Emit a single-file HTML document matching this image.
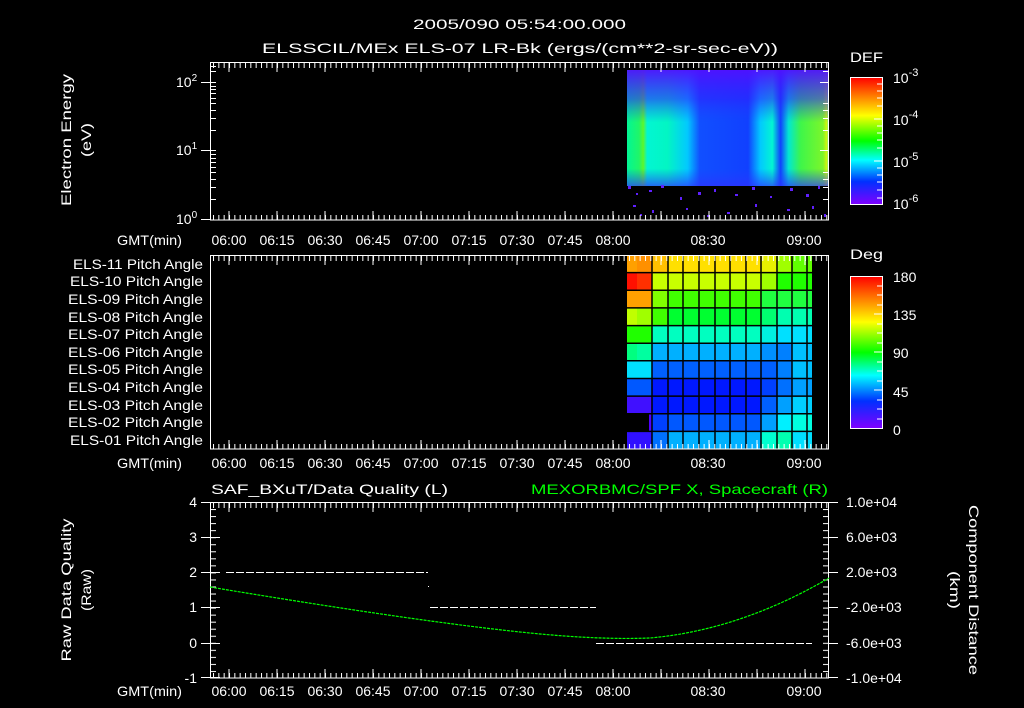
<!DOCTYPE html>
<html><head><meta charset="utf-8"><style>
html,body{margin:0;padding:0;background:#000;width:1024px;height:708px;overflow:hidden}
svg{display:block}
text{font-family:"Liberation Sans",sans-serif;fill:#fff;font-size:14px}
</style></head><body>
<svg width="1024" height="708" viewBox="0 0 1024 708" xmlns="http://www.w3.org/2000/svg">
<defs>
<pattern id="tb" x="229" y="0" width="5.333" height="708" patternUnits="userSpaceOnUse"><rect x="0" y="0" width="1" height="708" fill="#fff"/></pattern>
<pattern id="yb" x="0" y="502" width="1024" height="7.04" patternUnits="userSpaceOnUse"><rect x="0" y="0" width="1024" height="1" fill="#fff"/></pattern>
<linearGradient id="cb" x1="0" y1="0" x2="0" y2="1">
<stop offset="0" stop-color="#ff0000"/><stop offset="0.15" stop-color="#ff8000"/><stop offset="0.3" stop-color="#ffff00"/><stop offset="0.5" stop-color="#00ff00"/><stop offset="0.65" stop-color="#00ffff"/><stop offset="0.82" stop-color="#0030ff"/><stop offset="1" stop-color="#8000ff"/></linearGradient>
<linearGradient id="sp" x1="627" y1="0" x2="829" y2="0" gradientUnits="userSpaceOnUse">
<stop offset="0" stop-color="#00ff90"/><stop offset="0.06" stop-color="#20ff60"/><stop offset="0.08" stop-color="#60ff20"/><stop offset="0.1" stop-color="#00ffd0"/><stop offset="0.2" stop-color="#00ffc0"/><stop offset="0.3" stop-color="#00d0ff"/><stop offset="0.36" stop-color="#1050ff"/><stop offset="0.6" stop-color="#1040ff"/><stop offset="0.66" stop-color="#00d0ff"/><stop offset="0.72" stop-color="#00ffd0"/><stop offset="0.76" stop-color="#1040ff"/><stop offset="0.8" stop-color="#00f0d0"/><stop offset="0.86" stop-color="#40ff40"/><stop offset="0.97" stop-color="#80ff20"/><stop offset="0.99" stop-color="#e0ff00"/><stop offset="1" stop-color="#00ffff"/></linearGradient>
<linearGradient id="spv" x1="0" y1="70" x2="0" y2="186" gradientUnits="userSpaceOnUse">
<stop offset="0" stop-color="#5010ff" stop-opacity="0.95"/><stop offset="0.25" stop-color="#3020ff" stop-opacity="0.6"/><stop offset="0.45" stop-color="#2040ff" stop-opacity="0.05"/><stop offset="0.85" stop-color="#2040ff" stop-opacity="0.05"/><stop offset="1" stop-color="#3030ff" stop-opacity="0.7"/></linearGradient>
</defs>

<text x="413" y="29" textLength="213" lengthAdjust="spacingAndGlyphs" font-size="16">2005/090 05:54:00.000</text>
<text x="262" y="53" textLength="516" lengthAdjust="spacingAndGlyphs" font-size="16">ELSSCIL/MEx ELS-07 LR-Bk  (ergs/(cm**2-sr-sec-eV))</text>

<!-- PANEL 1 -->
<rect x="627" y="70" width="202" height="116" fill="url(#sp)"/>
<rect x="627" y="70" width="202" height="116" fill="url(#spv)"/>
<g fill="#6020ff">
<rect x="628" y="186" width="3" height="3"/><rect x="636" y="193" width="2" height="2"/><rect x="649" y="190" width="3" height="2"/><rect x="661" y="185" width="3" height="3"/><rect x="680" y="197" width="2" height="3"/><rect x="698" y="192" width="3" height="3"/><rect x="714" y="189" width="2" height="3"/><rect x="735" y="194" width="3" height="2"/><rect x="752" y="187" width="3" height="3"/><rect x="770" y="196" width="2" height="2"/><rect x="790" y="188" width="3" height="3"/><rect x="806" y="194" width="3" height="3"/><rect x="818" y="186" width="2" height="3"/>
<rect x="633" y="205" width="3" height="2"/><rect x="652" y="210" width="2" height="3"/><rect x="686" y="208" width="2" height="2"/><rect x="727" y="212" width="3" height="2"/><rect x="755" y="204" width="2" height="3"/><rect x="787" y="209" width="3" height="2"/><rect x="812" y="206" width="2" height="3"/><rect x="640" y="214" width="2" height="2"/><rect x="707" y="215" width="3" height="2"/><rect x="824" y="214" width="2" height="3"/>
</g>
<rect x="210.5" y="62.5" width="618" height="157.5" fill="none" stroke="#fff"/>
<rect x="210" y="63" width="619" height="5" fill="url(#tb)"/>
<rect x="210" y="215" width="619" height="5" fill="url(#tb)"/>
<g stroke="#fff">
<path d="M229 63v9M277 63v9M325 63v9M373 63v9M421 63v9M469 63v9M517 63v9M565 63v9M613 63v9M661 63v9M709 63v9M757 63v9M805 63v9"/>
<path d="M229 220v-9M277 220v-9M325 220v-9M373 220v-9M421 220v-9M469 220v-9M517 220v-9M565 220v-9M613 220v-9M661 220v-9M709 220v-9M757 220v-9M805 220v-9"/>
<path d="M201 82.5h15M201 150.5h15M201 219.5h9M210 199.5h6M210 187.5h6M210 179.5h6M210 172.5h6M210 167.5h6M210 162.5h6M210 158.5h6M210 154.5h6M210 130.5h6M210 118.5h6M210 110.5h6M210 103.5h6M210 98.5h6M210 93.5h6M210 89.5h6M210 86.5h6M210 71.5h6M210 66.5h6"/>
<path d="M829 82.5h-9M829 150.5h-9M829 199.5h-6M829 187.5h-6M829 179.5h-6M829 172.5h-6M829 130.5h-6M829 118.5h-6M829 110.5h-6M829 103.5h-6M829 71.5h-6"/>
</g>
<text x="176" y="87" font-size="14">10<tspan font-size="10" dy="-6">2</tspan></text>
<text x="176" y="155" font-size="14">10<tspan font-size="10" dy="-6">1</tspan></text>
<text x="176" y="224" font-size="14">10<tspan font-size="10" dy="-6">0</tspan></text>
<text transform="translate(71,140) rotate(-90)" text-anchor="middle" font-size="15" textLength="132" lengthAdjust="spacingAndGlyphs">Electron Energy</text>
<text transform="translate(91,140) rotate(-90)" text-anchor="middle" font-size="15" textLength="34" lengthAdjust="spacingAndGlyphs">(eV)</text>
<g font-size="14" text-anchor="middle">
<text x="229" y="245">06:00</text><text x="277" y="245">06:15</text><text x="325" y="245">06:30</text><text x="373" y="245">06:45</text><text x="421" y="245">07:00</text><text x="469" y="245">07:15</text><text x="517" y="245">07:30</text><text x="565" y="245">07:45</text><text x="613" y="245">08:00</text><text x="708" y="245">08:30</text><text x="804" y="245">09:00</text>
</g>
<text x="117" y="245" font-size="14" textLength="65" lengthAdjust="spacingAndGlyphs">GMT(min)</text>
<text x="850" y="62" font-size="16" textLength="33" lengthAdjust="spacingAndGlyphs">DEF</text>
<rect x="850.5" y="77.5" width="32" height="127" fill="url(#cb)" stroke="#fff"/>
<g stroke="#fff"><path d="M882 84h-5M882 91h-5M882 98h-5M882 106h-5M882 119h-8M882 126h-5M882 133h-5M882 140h-5M882 148h-5M882 161h-8M882 168h-5M882 175h-5M882 182h-5M882 190h-5M882 198h-5"/></g>
<g font-size="16"><text x="893" y="83">10<tspan font-size="11" dy="-7">-3</tspan></text><text x="893" y="125">10<tspan font-size="11" dy="-7">-4</tspan></text><text x="893" y="167">10<tspan font-size="11" dy="-7">-5</tspan></text><text x="893" y="209">10<tspan font-size="11" dy="-7">-6</tspan></text></g>

<!-- PANEL 2 -->
<g>
<g transform="translate(0,255)">
<rect x="627" y="0" width="10" height="18" fill="#ffa000"/><rect x="637" y="0" width="15" height="18" fill="#ff9000"/><rect x="652" y="0" width="16" height="18" fill="#ffc000"/><rect x="668" y="0" width="93" height="18" fill="#ffe000"/><rect x="761" y="0" width="16" height="18" fill="#e8f000"/><rect x="777" y="0" width="15" height="18" fill="#a0ff00"/><rect x="792" y="0" width="20" height="18" fill="#60ff00"/>
</g>
<g transform="translate(0,272.6)">
<rect x="627" y="0" width="10" height="18" fill="#ff1000"/><rect x="637" y="0" width="15" height="18" fill="#ff3000"/><rect x="652" y="0" width="109" height="18" fill="#c8ff00"/><rect x="761" y="0" width="16" height="18" fill="#a0ff00"/><rect x="777" y="0" width="35" height="18" fill="#20ff00"/>
</g>
<g transform="translate(0,290.3)">
<rect x="627" y="0" width="25" height="18" fill="#ffa000"/><rect x="652" y="0" width="16" height="18" fill="#80ff00"/><rect x="668" y="0" width="93" height="18" fill="#40ff00"/><rect x="761" y="0" width="51" height="18" fill="#20ff40"/>
</g>
<g transform="translate(0,307.9)">
<rect x="627" y="0" width="10" height="18" fill="#c0ff00"/><rect x="637" y="0" width="15" height="18" fill="#a0ff00"/><rect x="652" y="0" width="16" height="18" fill="#40ff00"/><rect x="668" y="0" width="93" height="18" fill="#00ff30"/><rect x="761" y="0" width="16" height="18" fill="#00ff70"/><rect x="777" y="0" width="35" height="18" fill="#00ffb0"/>
</g>
<g transform="translate(0,325.6)">
<rect x="627" y="0" width="25" height="18" fill="#20ff00"/><rect x="652" y="0" width="109" height="18" fill="#00ffc0"/><rect x="761" y="0" width="16" height="18" fill="#00f0e0"/><rect x="777" y="0" width="35" height="18" fill="#00e0ff"/>
</g>
<g transform="translate(0,343.2)">
<rect x="627" y="0" width="10" height="18" fill="#00ff80"/><rect x="637" y="0" width="15" height="18" fill="#00ffa0"/><rect x="652" y="0" width="109" height="18" fill="#00b0ff"/><rect x="761" y="0" width="16" height="18" fill="#0090ff"/><rect x="777" y="0" width="15" height="18" fill="#0080ff"/><rect x="792" y="0" width="20" height="18" fill="#00c0ff"/>
</g>
<g transform="translate(0,360.8)">
<rect x="627" y="0" width="25" height="18" fill="#00e0ff"/><rect x="652" y="0" width="125" height="18" fill="#0060ff"/><rect x="777" y="0" width="15" height="18" fill="#0080ff"/><rect x="792" y="0" width="20" height="18" fill="#00c0ff"/>
</g>
<g transform="translate(0,378.5)">
<rect x="627" y="0" width="25" height="18" fill="#0058ff"/><rect x="652" y="0" width="109" height="18" fill="#0018ff"/><rect x="761" y="0" width="16" height="18" fill="#0040ff"/><rect x="777" y="0" width="15" height="18" fill="#0070ff"/><rect x="792" y="0" width="20" height="18" fill="#00a0ff"/>
</g>
<g transform="translate(0,396.1)">
<rect x="627" y="0" width="25" height="18" fill="#4010ff"/><rect x="652" y="0" width="109" height="18" fill="#0018ff"/><rect x="761" y="0" width="16" height="18" fill="#0060ff"/><rect x="777" y="0" width="15" height="18" fill="#00a0ff"/><rect x="792" y="0" width="20" height="18" fill="#00d0ff"/>
</g>
<g transform="translate(0,413.8)">
<rect x="649" y="0" width="3" height="18" fill="#5000ff"/><rect x="652" y="0" width="16" height="18" fill="#0040ff"/><rect x="668" y="0" width="93" height="18" fill="#0058ff"/><rect x="761" y="0" width="16" height="18" fill="#00a0ff"/><rect x="777" y="0" width="15" height="18" fill="#00f0ff"/><rect x="792" y="0" width="20" height="18" fill="#00ffe0"/>
</g>
<g transform="translate(0,431.4)">
<rect x="627" y="0" width="25" height="18" fill="#3010ff"/><rect x="652" y="0" width="16" height="18" fill="#0070ff"/><rect x="668" y="0" width="93" height="18" fill="#00b0ff"/><rect x="761" y="0" width="16" height="18" fill="#00ffd0"/><rect x="777" y="0" width="15" height="18" fill="#00ffb0"/><rect x="792" y="0" width="20" height="18" fill="#00e0ff"/>
</g>
<g stroke="#000" stroke-width="1.5">
<path d="M652 255v194M668 255v194M683 255v194M699 255v194M715 255v194M730 255v194M746 255v194M761 255v194M777 255v194M792 255v194M807 255v194"/>
<path d="M627 272.6h185M627 290.3h185M627 307.9h185M627 325.6h185M627 343.2h185M627 360.8h185M627 378.5h185M627 396.1h185M627 413.8h185M627 431.4h185"/>
</g>
</g>
<rect x="210.5" y="255.5" width="618" height="193.5" fill="none" stroke="#fff"/>
<rect x="210" y="256" width="619" height="5" fill="url(#tb)"/>
<rect x="210" y="444" width="619" height="5" fill="url(#tb)"/>
<g stroke="#fff">
<path d="M229 256v9M277 256v9M325 256v9M373 256v9M421 256v9M469 256v9M517 256v9M565 256v9M613 256v9M661 256v9M709 256v9M757 256v9M805 256v9"/>
<path d="M229 449v-9M277 449v-9M325 449v-9M373 449v-9M421 449v-9M469 449v-9M517 449v-9M565 449v-9M613 449v-9M661 449v-9M709 449v-9M757 449v-9M805 449v-9"/>
</g>
<g font-size="14">
<text x="73" y="269" textLength="130" lengthAdjust="spacingAndGlyphs">ELS-11 Pitch Angle</text><text x="70" y="286" textLength="133" lengthAdjust="spacingAndGlyphs">ELS-10 Pitch Angle</text><text x="68" y="304" textLength="135" lengthAdjust="spacingAndGlyphs">ELS-09 Pitch Angle</text><text x="68" y="322" textLength="135" lengthAdjust="spacingAndGlyphs">ELS-08 Pitch Angle</text><text x="68" y="339" textLength="135" lengthAdjust="spacingAndGlyphs">ELS-07 Pitch Angle</text><text x="68" y="357" textLength="135" lengthAdjust="spacingAndGlyphs">ELS-06 Pitch Angle</text><text x="68" y="374" textLength="135" lengthAdjust="spacingAndGlyphs">ELS-05 Pitch Angle</text><text x="68" y="392" textLength="135" lengthAdjust="spacingAndGlyphs">ELS-04 Pitch Angle</text><text x="68" y="410" textLength="135" lengthAdjust="spacingAndGlyphs">ELS-03 Pitch Angle</text><text x="68" y="427" textLength="135" lengthAdjust="spacingAndGlyphs">ELS-02 Pitch Angle</text><text x="70" y="445" textLength="133" lengthAdjust="spacingAndGlyphs">ELS-01 Pitch Angle</text>
</g>
<g font-size="14" text-anchor="middle">
<text x="229" y="468">06:00</text><text x="277" y="468">06:15</text><text x="325" y="468">06:30</text><text x="373" y="468">06:45</text><text x="421" y="468">07:00</text><text x="469" y="468">07:15</text><text x="517" y="468">07:30</text><text x="565" y="468">07:45</text><text x="613" y="468">08:00</text><text x="708" y="468">08:30</text><text x="804" y="468">09:00</text>
</g>
<text x="117" y="468" font-size="14" textLength="65" lengthAdjust="spacingAndGlyphs">GMT(min)</text>
<text x="850" y="259" font-size="16" textLength="33" lengthAdjust="spacingAndGlyphs">Deg</text>
<rect x="850.5" y="276.5" width="32" height="152" fill="url(#cb)" stroke="#fff"/>
<g stroke="#fff"><path d="M882 286h-5M882 295h-5M882 305h-5M882 314h-8M882 324h-5M882 333h-5M882 343h-5M882 352h-8M882 362h-5M882 371h-5M882 381h-5M882 390h-8M882 400h-5M882 409h-5M882 419h-5"/></g>
<g font-size="16"><text x="893" y="282">180</text><text x="893" y="320">135</text><text x="893" y="358">90</text><text x="893" y="397">45</text><text x="893" y="435">0</text></g>

<!-- PANEL 3 -->
<text x="211" y="494" font-size="16" textLength="237" lengthAdjust="spacingAndGlyphs">SAF_BXuT/Data Quality (L)</text>
<text x="531" y="494" font-size="16" textLength="297" lengthAdjust="spacingAndGlyphs" style="fill:#00ff00">MEXORBMC/SPF X, Spacecraft (R)</text>
<rect x="210.5" y="502.5" width="618" height="175.5" fill="none" stroke="#fff"/>
<rect x="210" y="503" width="619" height="5" fill="url(#tb)"/>
<rect x="210" y="673" width="619" height="5" fill="url(#tb)"/>
<rect x="210" y="502" width="6" height="176" fill="url(#yb)"/>
<rect x="823" y="502" width="6" height="176" fill="url(#yb)"/>
<g stroke="#fff">
<path d="M229 503v9M277 503v9M325 503v9M373 503v9M421 503v9M469 503v9M517 503v9M565 503v9M613 503v9M661 503v9M709 503v9M757 503v9M805 503v9"/>
<path d="M229 678v-9M277 678v-9M325 678v-9M373 678v-9M421 678v-9M469 678v-9M517 678v-9M565 678v-9M613 678v-9M661 678v-9M709 678v-9M757 678v-9M805 678v-9"/>
<path d="M201 502.5h19M201 537.5h19M201 572.5h19M201 607.5h19M201 643.5h19M201 677.5h19M829 502.5h9M829 537.5h9M829 572.5h9M829 607.5h9M829 643.5h9M829 677.5h9"/>
</g>
<g stroke="#fff" stroke-width="1" stroke-dasharray="8 2">
<path d="M226 572.5h202M430 607.5h166M596 643.5h216"/>
</g>
<rect x="428" y="586" width="1" height="1" fill="#fff"/>
<path d="M210 587 Q420 622 530 633 Q600 640 650 638 Q740 630 829 578" fill="none" stroke="#00ff00" stroke-width="1.2" stroke-dasharray="3 1"/>
<g font-size="15" text-anchor="end"><text x="197" y="507">4</text><text x="197" y="542">3</text><text x="197" y="577">2</text><text x="197" y="612">1</text><text x="197" y="648">0</text><text x="197" y="683">-1</text></g>
<g font-size="14"><text x="846" y="507">1.0e+04</text><text x="846" y="542">6.0e+03</text><text x="846" y="577">2.0e+03</text><text x="846" y="612">-2.0e+03</text><text x="846" y="648">-6.0e+03</text><text x="846" y="683">-1.0e+04</text></g>
<text transform="translate(71,590) rotate(-90)" text-anchor="middle" font-size="15" textLength="143" lengthAdjust="spacingAndGlyphs">Raw Data Quality</text>
<text transform="translate(91,590) rotate(-90)" text-anchor="middle" font-size="15" textLength="42" lengthAdjust="spacingAndGlyphs">(Raw)</text>
<text transform="translate(969,590) rotate(90)" text-anchor="middle" font-size="15" textLength="170" lengthAdjust="spacingAndGlyphs">Component Distance</text>
<text transform="translate(950,590) rotate(90)" text-anchor="middle" font-size="15" textLength="38" lengthAdjust="spacingAndGlyphs">(km)</text>
<g font-size="14" text-anchor="middle">
<text x="229" y="696">06:00</text><text x="277" y="696">06:15</text><text x="325" y="696">06:30</text><text x="373" y="696">06:45</text><text x="421" y="696">07:00</text><text x="469" y="696">07:15</text><text x="517" y="696">07:30</text><text x="565" y="696">07:45</text><text x="613" y="696">08:00</text><text x="708" y="696">08:30</text><text x="804" y="696">09:00</text>
</g>
<text x="117" y="696" font-size="14" textLength="65" lengthAdjust="spacingAndGlyphs">GMT(min)</text>
</svg>
</body></html>
